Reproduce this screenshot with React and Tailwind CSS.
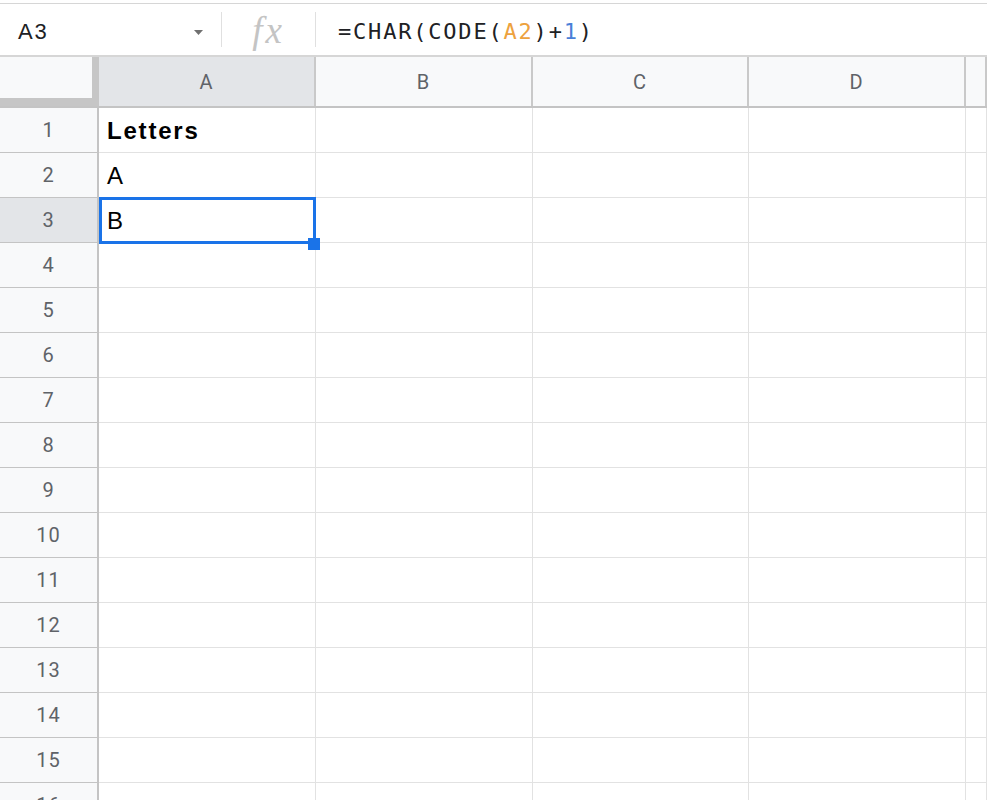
const COLS = [
  { name: "A", w: "w-[217px]", selected: true },
  { name: "B", w: "w-[217px]" },
  { name: "C", w: "w-[216px]" },
  { name: "D", w: "w-[217px]" },
  { name: "", w: "flex-1" },
];

const CELLS = { 1: { text: "Letters", bold: true }, 2: { text: "A" }, 3: { text: "B" } };

const ROWS = Array.from({ length: 16 }, (_, i) => i + 1);

function FormulaBar() {
  return (
    <div className="h-[54px] border-t border-b-2 border-[#d6d6d6] flex items-stretch bg-white">
      <div className="w-[221px] flex items-center justify-between pl-[18px] pr-[18px] pt-[4px]">
        <span className="text-[22px] text-[#202124] tracking-[1.8px] font-['Liberation_Sans',Arial,sans-serif]">A3</span>
        <svg width="9" height="5" viewBox="0 0 9 5" className="mt-[2px]">
          <path d="M0 0 L9 0 L4.5 5 Z" fill="#707070" />
        </svg>
      </div>
      <div className="w-px bg-[#e0e0e0] my-[8px]" />
      <div className="w-[93px] flex items-center justify-center pt-[2px]">
        <span className="italic text-[37px] leading-none text-[#c4c4c4] tracking-[3px] font-['Liberation_Serif',serif]">fx</span>
      </div>
      <div className="w-px bg-[#e0e0e0] my-[8px]" />
      <div className="flex-1 flex items-center pl-[22px] pt-[4px] text-[22px] tracking-[1.8px] text-[#202124] font-['DejaVu_Sans_Mono',monospace]">
        <span>=CHAR(CODE(</span>
        <span className="text-[#eda23e]">A2</span>
        <span>)+</span>
        <span className="text-[#4a7fd8]">1</span>
        <span>)</span>
      </div>
    </div>
  );
}

function HeaderRow() {
  return (
    <div className="h-[51px] flex border-b-2 border-[#c4c4c4] bg-[#f8f9fa]">
      <div className="w-[99px] h-[49px] shrink-0 bg-[#f8f9fa] border-r-[7px] border-b-[8px] border-[#c6c6c6]" />
      {COLS.map((c, i) => (
        <div
          key={i}
          className={`${c.w} shrink-0 flex items-center justify-center border-r-2 border-[#c9c9c9] text-[20px] tracking-[1px] text-[#5f6368] font-['Roboto',sans-serif] ${c.selected ? "bg-[#e3e5e8]" : "bg-[#f8f9fa]"}`}
        >
          {c.name}
        </div>
      ))}
    </div>
  );
}

function GridRow({ n }) {
  const cell = CELLS[n];
  return (
    <div className="h-[45px] flex">
      <div
        className={`w-[99px] shrink-0 flex items-center justify-center border-r-2 border-b border-[#c4c4c4] text-[20px] tracking-[1px] text-[#5f6368] font-['Roboto',sans-serif] ${n === 3 ? "bg-[#e3e5e8]" : "bg-[#f8f9fa]"}`}
      >
        {n}
      </div>
      {COLS.map((c, i) => (
        <div key={i} className={`${c.w} shrink-0 relative border-r border-b border-[#e2e2e2] bg-white`}>
          {i === 0 && cell && (
            <div
              className={`h-full flex items-center pl-[8px] pt-[2px] text-[24px] text-black font-['Liberation_Sans',Arial,sans-serif] ${cell.bold ? "font-bold tracking-[1.8px]" : "tracking-[2px]"}`}
            >
              {cell.text}
            </div>
          )}
          {i === 0 && n === 3 && (
            <>
              <div className="absolute z-10 left-0 top-[-1px] right-[-1px] bottom-[-2px] border-[3px] border-[#1a73e8]" />
              <div className="absolute z-20 right-[-5px] bottom-[-8px] w-[12px] h-[12px] bg-[#1a73e8]" />
            </>
          )}
        </div>
      ))}
    </div>
  );
}

export default function App() {
  return (
    <div className="w-[987px] h-[800px] overflow-hidden bg-white pt-[3px]">
      <FormulaBar />
      <HeaderRow />
      {ROWS.map(n => (
        <GridRow key={n} n={n} />
      ))}
    </div>
  );
}
